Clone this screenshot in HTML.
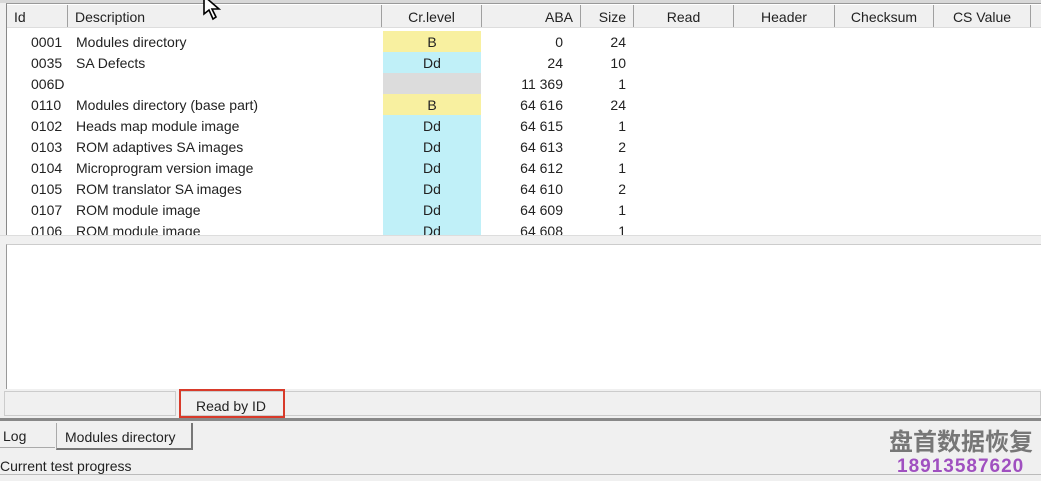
<!DOCTYPE html><html><head><style>
body{margin:0;width:1041px;height:481px;background:#f0f0f0;font-family:"Liberation Sans",sans-serif;font-size:14px;color:#222;position:relative;overflow:hidden}
.a{position:absolute}
.h{top:5px;height:22px;line-height:24px;border-right:1px solid #a0a0a0;background:#f0f0f0;box-sizing:border-box;padding:0 7px}
.r{position:absolute;left:0;height:21px;line-height:23px;width:1041px}
.r span{position:absolute}
</style></head><body>
<div class="a" style="left:0;top:0;width:1041px;height:3px;background:#d8d8d8"></div>
<div class="a" style="left:6px;top:3px;width:1035px;height:233px;background:#fff;border-left:1px solid #888;border-top:1px solid #999"></div>
<div class="a h" style="left:7px;width:61px">Id</div>
<div class="a h" style="left:68px;width:314px">Description</div>
<div class="a h" style="left:382px;width:100px;text-align:center">Cr.level</div>
<div class="a h" style="left:482px;width:99px;text-align:right">ABA</div>
<div class="a h" style="left:581px;width:53px;text-align:right">Size</div>
<div class="a h" style="left:634px;width:100px;text-align:center">Read</div>
<div class="a h" style="left:734px;width:101px;text-align:center">Header</div>
<div class="a h" style="left:835px;width:99px;text-align:center">Checksum</div>
<div class="a h" style="left:934px;width:97px;text-align:center">CS Value</div>
<div class="a h" style="left:1031px;width:10px;border-right:none"></div>
<div class="a" style="left:7px;top:27px;width:1034px;height:1px;background:#ddd"></div>
<div class="a" style="left:0;top:31px;width:1041px;height:204px;overflow:hidden">
<div class="r" style="top:0"><span style="left:31px">0001</span><span style="left:76px">Modules directory</span><span style="left:383px;width:98px;background:#f8f0a0;text-align:center">B</span><span style="left:481px;width:82px;text-align:right">0</span><span style="left:581px;width:45px;text-align:right">24</span></div>
<div class="r" style="top:21px"><span style="left:31px">0035</span><span style="left:76px">SA Defects</span><span style="left:383px;width:98px;background:#c0f0f8;text-align:center">Dd</span><span style="left:481px;width:82px;text-align:right">24</span><span style="left:581px;width:45px;text-align:right">10</span></div>
<div class="r" style="top:42px"><span style="left:31px">006D</span><span style="left:383px;width:98px;height:21px;background:#dcdcdc"></span><span style="left:481px;width:82px;text-align:right">11 369</span><span style="left:581px;width:45px;text-align:right">1</span></div>
<div class="r" style="top:63px"><span style="left:31px">0110</span><span style="left:76px">Modules directory (base part)</span><span style="left:383px;width:98px;background:#f8f0a0;text-align:center">B</span><span style="left:481px;width:82px;text-align:right">64 616</span><span style="left:581px;width:45px;text-align:right">24</span></div>
<div class="r" style="top:84px"><span style="left:31px">0102</span><span style="left:76px">Heads map module image</span><span style="left:383px;width:98px;background:#c0f0f8;text-align:center">Dd</span><span style="left:481px;width:82px;text-align:right">64 615</span><span style="left:581px;width:45px;text-align:right">1</span></div>
<div class="r" style="top:105px"><span style="left:31px">0103</span><span style="left:76px">ROM adaptives SA images</span><span style="left:383px;width:98px;background:#c0f0f8;text-align:center">Dd</span><span style="left:481px;width:82px;text-align:right">64 613</span><span style="left:581px;width:45px;text-align:right">2</span></div>
<div class="r" style="top:126px"><span style="left:31px">0104</span><span style="left:76px">Microprogram version image</span><span style="left:383px;width:98px;background:#c0f0f8;text-align:center">Dd</span><span style="left:481px;width:82px;text-align:right">64 612</span><span style="left:581px;width:45px;text-align:right">1</span></div>
<div class="r" style="top:147px"><span style="left:31px">0105</span><span style="left:76px">ROM translator SA images</span><span style="left:383px;width:98px;background:#c0f0f8;text-align:center">Dd</span><span style="left:481px;width:82px;text-align:right">64 610</span><span style="left:581px;width:45px;text-align:right">2</span></div>
<div class="r" style="top:168px"><span style="left:31px">0107</span><span style="left:76px">ROM module image</span><span style="left:383px;width:98px;background:#c0f0f8;text-align:center">Dd</span><span style="left:481px;width:82px;text-align:right">64 609</span><span style="left:581px;width:45px;text-align:right">1</span></div>
<div class="r" style="top:189px"><span style="left:31px">0106</span><span style="left:76px">ROM module image</span><span style="left:383px;width:98px;background:#c0f0f8;text-align:center">Dd</span><span style="left:481px;width:82px;text-align:right">64 608</span><span style="left:581px;width:45px;text-align:right">1</span></div>
</div>
<div class="a" style="left:0;top:235px;width:1041px;height:8px;background:#f0f0f0;border-top:1px solid #ddd"></div>
<div class="a" style="left:6px;top:244px;width:1035px;height:144px;background:#fff;border-left:1px solid #999;border-top:1px solid #ccc"></div>
<div class="a" style="left:4px;top:391px;width:172px;height:25px;border:1px solid #ccc;box-sizing:border-box"></div>
<div class="a" style="left:180px;top:391px;width:861px;height:25px;border:1px solid #ccc;box-sizing:border-box"></div>
<div class="a" style="left:179px;top:389px;width:106px;height:29px;border:2px solid #d83a2a;box-sizing:border-box"></div>
<div class="a" style="left:196px;top:396px;line-height:20px">Read by ID</div>
<div class="a" style="left:0;top:418px;width:1041px;height:3px;background:#888"></div>
<div class="a" style="left:3px;top:426px;line-height:20px">Log</div>
<div class="a" style="left:0;top:447px;width:55px;height:1px;background:#aaa"></div>
<div class="a" style="left:56px;top:423px;width:137px;height:27px;border:1px solid #aaa;border-top:none;border-right:2px solid #777;border-bottom:2px solid #777;box-sizing:border-box;background:#f0f0f0;padding-left:8px;line-height:28px">Modules directory</div>
<div class="a" style="left:0;top:456px;line-height:20px">Current test progress</div>
<div class="a" style="left:0;top:474px;width:1041px;height:1px;background:#bbb"></div>
<div class="a" style="left:889px;top:424px;font-family:'Noto Sans CJK SC',sans-serif;font-size:24px;color:#777;font-weight:bold;line-height:32px">盘首数据恢复</div>
<div class="a" style="left:897px;top:456px;font-size:19px;color:#a050c0;font-weight:bold;line-height:21px;letter-spacing:1px">18913587620</div>
<svg class="a" style="left:202px;top:0" width="24" height="24" viewBox="0 0 24 24"><path d="M2 -4 L2 14 L7 10 L11 19 L14 17 L10 9 L17 9 Z" fill="#fff" stroke="#000" stroke-width="1.6"/></svg>
</body></html>
